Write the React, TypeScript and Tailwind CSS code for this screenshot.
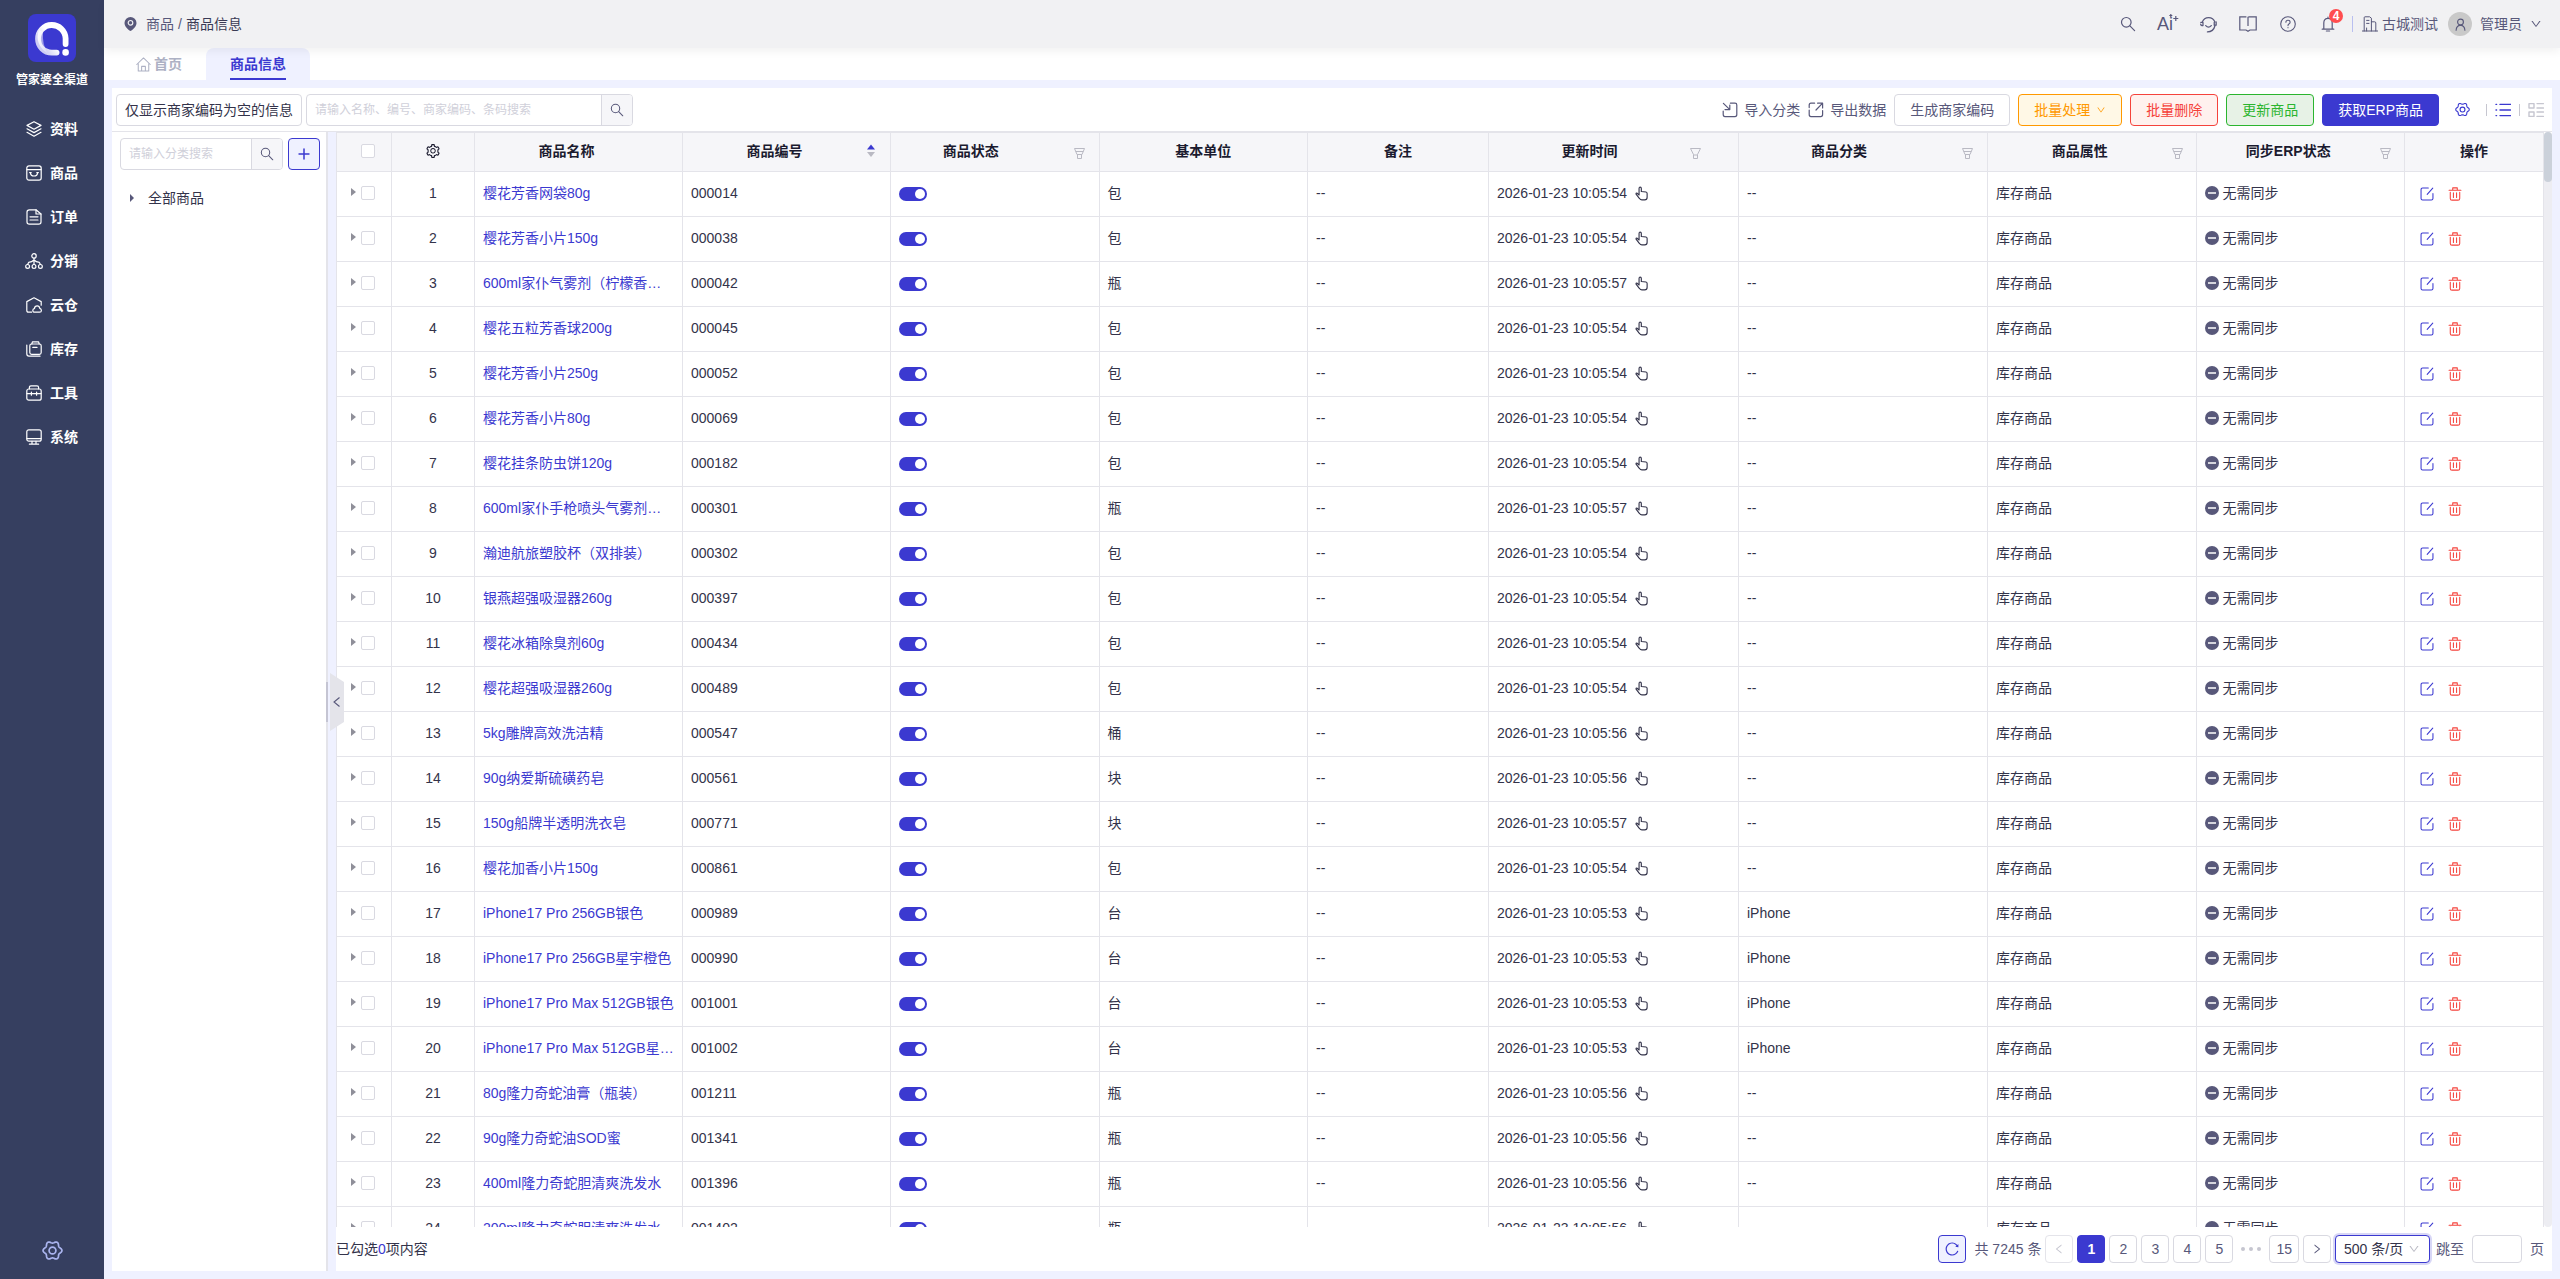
import { useState } from 'react';
import type { ReactNode } from 'react';
import clsx from 'clsx';
import { AiOutlineDown, AiOutlineLeft, AiOutlineReload, AiOutlineRight, AiOutlineSetting } from 'react-icons/ai';

type IconProps = { className?: string; size?: number; children?: ReactNode; sw?: number };

function Svg({ className, size = 16, sw = 1, children }: IconProps) {
  return (
    <svg
      className={clsx('shrink-0', className)}
      width={size}
      height={size}
      viewBox="0 0 16 16"
      fill="none"
      stroke="currentColor"
      strokeWidth={sw}
      strokeLinecap="round"
      strokeLinejoin="round"
      aria-hidden="true"
    >
      {children}
    </svg>
  );
}

const SearchIcon = ({ size = 16, className }: IconProps) => (
  <Svg size={size} className={className} sw={1.2}>
    <circle cx="6.3" cy="6.3" r="4.8" />
    <path d="M9.9 9.9 L14.6 14.6" />
  </Svg>
);

// six soft lobes round the hub
const gearOutline = Array.from({ length: 72 }, (_, i) => {
  const a = (i * Math.PI) / 36;
  const r = 6.4 + 0.8 * Math.cos(6 * a);
  return `${(8 + r * Math.cos(a)).toFixed(2)},${(8 + r * Math.sin(a)).toFixed(2)}`;
}).join(' ');

const GearIcon = ({ size = 16, className, sw = 1.2 }: IconProps) => (
  <Svg size={size} className={className} sw={sw}>
    <polygon points={gearOutline} />
    <circle cx="8" cy="8" r="2.6" />
  </Svg>
);

const EditIcon = () => (
  <Svg size={14} sw={1.2}>
    <path d="M9.5 1.2 H3 Q1.2 1.2 1.2 3 V13 Q1.2 14.8 3 14.8 H13 Q14.8 14.8 14.8 13 V7.5" />
    <path d="M14.6 1.2 L8.2 8.4" />
  </Svg>
);

const TrashIcon = () => (
  <Svg size={14} sw={1.2}>
    <path d="M1.2 3.6 H14.8 M5.4 3.4 V1 H10.6 V3.4 M2.6 6 V13 Q2.6 15 4.6 15 H11.4 Q13.4 15 13.4 13 V6" />
    <path d="M6.2 6.5 V12 M9.8 6.5 V12" />
  </Svg>
);

const HandIcon = () => (
  <Svg size={15} sw={1.2}>
    <path d="M5.4 9.6 V2.6 Q5.4 1.2 6.6 1.2 Q7.8 1.2 7.8 2.6 V5.8 L12.8 6.4 Q14 6.6 14 8 V12 Q14 14.8 11.4 14.8 H8.4 Q6.8 14.8 5.9 13.4 L2.2 8.6 Q2 7.4 3.2 7.6 L5.4 9.6" />
  </Svg>
);

const StatusIcon = () => (
  <svg className="shrink-0" width="14" height="14" viewBox="0 0 14 14" aria-hidden="true">
    <circle cx="7" cy="7" r="7" fill="#58587a" />
    <path d="M3 7 H11" stroke="#fff" strokeWidth="1.5" />
  </svg>
);

const FilterIcon = ({ lines }: { lines?: boolean }) => (
  <svg className="mt-1 shrink-0" width="11" height="11" viewBox="0 0 11 11" fill="none" stroke="#b9b9c3" aria-hidden="true">
    {lines ? (
      <path d="M0.5 0.5 H10.5 L8 6.5 H3 Z M1.8 3.5 H9.2 M3.5 6.5 V10.5 H7.5 V6.5" />
    ) : (
      <path d="M0.5 0.5 H10.5 L7.5 6.5 V10.5 H3.5 V6.5 Z M3.5 7 H7.5" />
    )}
  </svg>
);

const SortIcon = () => (
  <svg className="shrink-0" width="10" height="14" viewBox="0 0 10 14" aria-hidden="true">
    <path d="M1 5.5 L5 0.5 L9 5.5 Z" fill="#3b39d0" />
    <path d="M1 8 L5 13 L9 8 Z" fill="#b9b9c3" />
  </svg>
);

const menu: { label: string; icon: ReactNode }[] = [
  {
    label: '资料',
    icon: (
      <>
        <path d="M8 0.7 L15 4.4 L8 8.2 L1 4.4 Z" />
        <path d="M1 7.8 L8 11.6 L15 7.8 M1 11.3 L8 15.2 L15 11.3" />
      </>
    ),
  },
  {
    label: '商品',
    icon: (
      <>
        <rect x="0.8" y="0.8" width="14.4" height="14.4" rx="2.2" />
        <path d="M1 4.6 H15 M4.4 7.6 Q4.6 11 8 11 Q11.4 11 11.6 7.6 M3.6 7.6 H5.2 M10.8 7.6 H12.4" />
      </>
    ),
  },
  {
    label: '订单',
    icon: (
      <>
        <path d="M10 0.8 H3.4 Q1 0.8 1 3 V13 Q1 15.2 3.4 15.2 H12.6 Q15 15.2 15 13 V5 Z" />
        <path d="M10 0.8 V5 H15 M4 7.8 H12 M4 11 H12" />
      </>
    ),
  },
  {
    label: '分销',
    icon: (
      <>
        <circle cx="8" cy="2.9" r="2.2" />
        <circle cx="1.6" cy="13.4" r="1.9" />
        <circle cx="8" cy="13.4" r="1.9" />
        <circle cx="14.4" cy="13.4" r="1.9" />
        <path d="M8 5.2 V11.4 M8 7 Q6 9 2.6 9.4 L1.6 11.4 M8 7 Q10 9 13.4 9.4 L14.4 11.4" />
      </>
    ),
  },
  {
    label: '云仓',
    icon: (
      <>
        <path d="M5.6 15.2 H2.4 Q0.8 15.2 0.8 13.6 V4.6 L8 0.8 L15.2 4.6 V8.2" />
        <path d="M8.8 15.2 Q6.8 15.2 6.8 13.4 Q6.8 11.8 8.4 11.6 Q8.8 8.8 11.2 8.8 Q13.4 8.8 13.8 11.4 Q15.4 11.8 15.4 13.4 Q15.4 15.2 13.6 15.2 Z" />
      </>
    ),
  },
  {
    label: '库存',
    icon: (
      <>
        <rect x="3.8" y="3" width="11.4" height="10.4" rx="1.8" />
        <path d="M5.8 3 L6.4 0.8 H12.6 L13.2 3 M6.8 6.4 H11 M0.8 4 V12.8 Q0.8 15.2 3 15.2 H14" />
      </>
    ),
  },
  {
    label: '工具',
    icon: (
      <>
        <rect x="0.8" y="4" width="14.4" height="11.2" rx="2" />
        <path d="M3.4 3.8 V2.4 Q3.4 0.8 5 0.8 H11 Q12.6 0.8 12.6 2.4 V3.8 M1 8.6 H15 M5.4 7 V10.2 M10.6 7 V10.2" />
      </>
    ),
  },
  {
    label: '系统',
    icon: (
      <>
        <rect x="0.8" y="0.8" width="14.4" height="11.4" rx="2" />
        <path d="M1 9.6 H15 M6 12.4 V15 M10 12.4 V15 M3.4 15.2 H12.6" />
      </>
    ),
  },
];

interface Product {
  name: string;
  code: string;
  unit: string;
  sec: string;
  category?: string;
}

const products: Product[] = [
  { name: '樱花芳香网袋80g', code: '000014', unit: '包', sec: '54' },
  { name: '樱花芳香小片150g', code: '000038', unit: '包', sec: '54' },
  { name: '600ml家仆气雾剂（柠檬香…', code: '000042', unit: '瓶', sec: '57' },
  { name: '樱花五粒芳香球200g', code: '000045', unit: '包', sec: '54' },
  { name: '樱花芳香小片250g', code: '000052', unit: '包', sec: '54' },
  { name: '樱花芳香小片80g', code: '000069', unit: '包', sec: '54' },
  { name: '樱花挂条防虫饼120g', code: '000182', unit: '包', sec: '54' },
  { name: '600ml家仆手枪喷头气雾剂…', code: '000301', unit: '瓶', sec: '57' },
  { name: '瀚迪航旅塑胶杯（双排装）', code: '000302', unit: '包', sec: '54' },
  { name: '银燕超强吸湿器260g', code: '000397', unit: '包', sec: '54' },
  { name: '樱花冰箱除臭剂60g', code: '000434', unit: '包', sec: '54' },
  { name: '樱花超强吸湿器260g', code: '000489', unit: '包', sec: '54' },
  { name: '5kg雕牌高效洗洁精', code: '000547', unit: '桶', sec: '56' },
  { name: '90g纳爱斯硫磺药皂', code: '000561', unit: '块', sec: '56' },
  { name: '150g船牌半透明洗衣皂', code: '000771', unit: '块', sec: '57' },
  { name: '樱花加香小片150g', code: '000861', unit: '包', sec: '54' },
  { name: 'iPhone17 Pro 256GB银色', code: '000989', unit: '台', sec: '53', category: 'iPhone' },
  { name: 'iPhone17 Pro 256GB星宇橙色', code: '000990', unit: '台', sec: '53', category: 'iPhone' },
  { name: 'iPhone17 Pro Max 512GB银色', code: '001001', unit: '台', sec: '53', category: 'iPhone' },
  { name: 'iPhone17 Pro Max 512GB星…', code: '001002', unit: '台', sec: '53', category: 'iPhone' },
  { name: '80g隆力奇蛇油膏（瓶装）', code: '001211', unit: '瓶', sec: '56' },
  { name: '90g隆力奇蛇油SOD蜜', code: '001341', unit: '瓶', sec: '56' },
  { name: '400ml隆力奇蛇胆清爽洗发水', code: '001396', unit: '瓶', sec: '56' },
  { name: '200ml隆力奇蛇胆清爽洗发水', code: '001402', unit: '瓶', sec: '56' },
];

function Sidebar() {
  return (
    <aside className="flex w-[104px] shrink-0 flex-col items-center bg-[#363f60] pt-[14px] text-white">
      <svg width="48" height="48" viewBox="0 0 48 48" role="img" aria-label="logo">
        <defs>
          <linearGradient id="ring" x1="0.1" y1="0.75" x2="0.75" y2="0.3">
            <stop offset="0" stopColor="#fff" stopOpacity="0.75" />
            <stop offset="0.6" stopColor="#fff" />
          </linearGradient>
          <linearGradient id="crescent" x1="0" y1="0" x2="1" y2="0">
            <stop offset="0" stopColor="#fff" stopOpacity="0.9" />
            <stop offset="1" stopColor="#fff" stopOpacity="0.1" />
          </linearGradient>
        </defs>
        <rect width="48" height="48" rx="8" fill="#3b39d0" />
        <path d="M11 16 Q6 30 20 40 Q14 30 15 18 Z" fill="url(#crescent)" />
        <path
          d="M37.6 30 V24.4 A13.8 13.8 0 1 0 23.8 38.6 H28.6"
          fill="none"
          stroke="url(#ring)"
          strokeWidth="5.8"
          strokeLinecap="round"
        />
        <circle cx="37.6" cy="38.4" r="3.3" fill="#fff" />
      </svg>
      <div className="mt-[9px] text-xs leading-[18px] font-bold">管家婆全渠道</div>
      <nav className="mt-[18px] flex w-full flex-col">
        {menu.map((m) => (
          <a key={m.label} href="#" className="flex h-11 items-center gap-2 pl-[26px] text-sm font-bold">
            <Svg sw={1.2} className="overflow-visible">{m.icon}</Svg>
            {m.label}
          </a>
        ))}
      </nav>
      <button type="button" aria-label="设置" className="mt-auto mb-[18px] text-[#aab4ee]">
        <GearIcon size={21} sw={1.3} />
      </button>
    </aside>
  );
}

function HeaderIcon({ label, children }: { label: string; children: ReactNode }) {
  return (
    <button type="button" aria-label={label} className="relative flex h-12 w-10 items-center justify-center">
      {children}
    </button>
  );
}

function TopBar() {
  return (
    <header className="relative z-10 flex h-12 items-center bg-[#f1f1f3] pr-[18px] pl-5 text-sm text-[#58587a] shadow-[0_4px_8px_rgba(0,0,0,0.05)]">
      <svg className="mr-[9px]" width="13" height="14" viewBox="0 0 13 14" aria-hidden="true">
        <path d="M6.5 0 A6 6 0 0 1 12.5 6 C12.5 9.6 9 12.6 6.5 14 C4 12.6 0.5 9.6 0.5 6 A6 6 0 0 1 6.5 0 Z" fill="#58587a" />
        <circle cx="6.5" cy="5.8" r="2.3" fill="none" stroke="#f1f1f3" strokeWidth="1.2" />
      </svg>
      <a href="#">商品</a>
      <span className="mx-1">/</span>
      <span className="text-[#3a3a55]">商品信息</span>

      <div className="ml-auto flex items-center">
        <HeaderIcon label="搜索">
          <SearchIcon size={16} />
        </HeaderIcon>
        <HeaderIcon label="AI 助手">
          <span className="flex items-start text-lg leading-5">
            Ai
            <svg className="-ml-1" width="10" height="9" viewBox="0 0 10 9" stroke="currentColor" strokeWidth="1.2" aria-hidden="true">
              <path d="M6.8 2 V7 M4.3 4.5 H9.3 M1.8 0 V3 M0.3 1.5 H3.3" />
            </svg>
          </span>
        </HeaderIcon>
        <HeaderIcon label="客服">
          <Svg sw={1.2} size={17}>
            <path d="M2.2 5.6 A6.3 6.3 0 0 1 14 5.6 M0.8 6 H2.8 V9 H1.8 Q0.6 8.8 0.6 7.6 M15.2 5.6 V8.6 H13.4 V6 M14 9.4 Q12.6 15 7 15 M5.4 9 Q8 11.8 10.6 9" />
          </Svg>
        </HeaderIcon>
        <HeaderIcon label="帮助文档">
          <svg width="18" height="16" viewBox="0 0 18 16" fill="none" stroke="currentColor" strokeWidth="1.2" aria-hidden="true">
            <path d="M7.4 0.8 H0.8 V14 H7 L9 15.2 L11 14 H17.2 V0.8 H9.4 M9 0.8 V10" />
          </svg>
        </HeaderIcon>
        <HeaderIcon label="帮助">
          <Svg sw={1.1}>
            <circle cx="8" cy="8" r="7.3" />
            <path d="M5.9 6.3 Q5.9 4.3 8 4.3 Q10.1 4.3 10.1 6.2 Q10.1 7.3 8.9 7.9 Q8 8.4 8 9.6 M8 11.6 V11.8" />
          </Svg>
        </HeaderIcon>
        <HeaderIcon label="消息">
          <Svg sw={1.2}>
            <path d="M2.2 13.2 H13.8 M3.8 13 V7 Q3.8 2.4 8 2.4 Q12.2 2.4 12.2 7 V13 M8 2.2 V1 M6.4 15 H9.6" />
          </Svg>
          <span className="absolute top-[9px] left-[21px] flex size-[14px] items-center justify-center rounded-full bg-[#ff4d4f] text-xs leading-none font-bold text-white">
            4
          </span>
        </HeaderIcon>
        <span className="mx-1 h-4 w-px bg-[#b9bff0]" />
        <Svg className="ml-[5px]">
          <path d="M0.4 15 H15.6 M2.2 15 V1.6 Q2.2 0.8 3 0.8 H7.6 L9.4 2.2 V15 M9.4 5.8 H12.6 Q13.8 5.8 13.8 7 V15 M4.6 4.4 H7 M4.6 7.4 H7 M4.6 12 V15" />
        </Svg>
        <span className="ml-1">古城测试</span>
        <button type="button" className="ml-[10px] flex items-center">
          <span className="flex size-6 items-center justify-center rounded-full bg-[#c9c9c9]">
            <Svg size={13} sw={1.4}>
              <circle cx="8" cy="5" r="3.6" />
              <path d="M2.6 15 Q3 9.4 8 8.8 Q13 9.4 13.4 15" />
            </Svg>
          </span>
          <span className="mx-2">管理员</span>
          <AiOutlineDown size={12} />
        </button>
      </div>
    </header>
  );
}

function Tabs() {
  return (
    <div className="flex h-8 bg-white text-sm font-bold">
      <a href="#" className="flex w-[102px] items-center gap-[3px] pl-8 text-[#adb1c4]">
        <Svg size={15} sw={1.1}>
          <path d="M0.8 8 L8 1 L15.2 8 M2.4 6.8 V15 H13.6 V6.8 M6 15 V10 H10 V15" />
        </Svg>
        首页
      </a>
      <a href="#" className="flex h-full items-end rounded-t-lg bg-[#eff1ff] px-6 text-[#3b39d0]">
        <span className="border-b-2 border-[#3b39d0] leading-7">商品信息</span>
      </a>
    </div>
  );
}

function SearchBox({ id, placeholder, className }: { id: string; placeholder: string; className: string }) {
  return (
    <div className={clsx('flex h-8 overflow-hidden rounded border border-[#d9d9e1]', className)}>
      <input
        id={id}
        type="text"
        aria-label={placeholder}
        placeholder={placeholder}
        className="min-w-0 flex-1 px-2 text-xs outline-none placeholder:text-[#d0d0da]"
      />
      <button type="button" aria-label="搜索" className="flex w-[31px] items-center justify-center border-l border-[#d9d9e1] bg-[#f6f6f9] text-[#58587a]">
        <SearchIcon size={14} />
      </button>
    </div>
  );
}

function Toolbar() {
  const btn = 'flex h-8 items-center rounded border px-[15px]';
  return (
    <div className="flex h-11 shrink-0 items-center border-b border-[#e4e4ea] pr-2 pl-1 text-sm">
      <button type="button" className="h-8 rounded border border-[#d9d9e1] px-2 text-[#33334a]">
        仅显示商家编码为空的信息
      </button>
      <SearchBox id="kw" placeholder="请输入名称、编号、商家编码、条码搜索" className="ml-1 w-[327px]" />

      <div className="ml-auto flex items-center gap-2 text-[#58587a]">
        <button type="button" className="flex items-center gap-[6px]">
          <Svg sw={1.2}>
            <path d="M8.4 1.2 H13 Q14.8 1.2 14.8 3 V12.6 Q14.8 14.6 13 14.6 H3 Q1.2 14.6 1.2 12.6 V9 M1.4 1.4 L7.6 7.4 M7.8 3 V7.6 H3" />
          </Svg>
          导入分类
        </button>
        <button type="button" className="flex items-center gap-[6px]">
          <Svg sw={1.2}>
            <path d="M6.6 1.2 H3 Q1.2 1.2 1.2 3 V5.6 M1.2 8 V12.6 Q1.2 14.6 3 14.6 H12.8 Q14.6 14.6 14.6 12.6 V8.6 M8 8 L14.4 1.4 M9.6 1.2 H14.6 V6" />
          </Svg>
          导出数据
        </button>
        <button type="button" className={clsx(btn, 'border-[#d9d9e1]')}>生成商家编码</button>
        <button type="button" className={clsx(btn, 'gap-[6px] border-[#ff9900] bg-[#fff8e6] text-[#ff9900]')}>
          批量处理
          <AiOutlineDown size={10} />
        </button>
        <button type="button" className={clsx(btn, 'border-[#f5423b] bg-[#fff1ee] text-[#f5423b]')}>批量删除</button>
        <button type="button" className={clsx(btn, 'border-[#2bb52f] bg-[#e7f2e6] text-[#2bb52f]')}>更新商品</button>
        <button type="button" className={clsx(btn, 'border-[#3b39d0] bg-[#3b39d0] text-white')}>获取ERP商品</button>
        <button type="button" aria-label="列设置" className="ml-2 text-[#3b39d0]">
          <GearIcon size={15} />
        </button>
        <span className="ml-2 h-3 w-px bg-[#c6c6d0]" />
        <button type="button" aria-label="列表视图" className="text-[#3b39d0]">
          <Svg sw={1.4}>
            <path d="M1 2.4 H1.6 M5 2.4 H15.6 M1 8 H1.6 M5 8 H15.6 M1 13.6 H1.6 M5 13.6 H15.6" />
          </Svg>
        </button>
        <span className="h-3 w-px bg-[#c6c6d0]" />
        <button type="button" aria-label="卡片视图" className="text-[#c6c6d0]">
          <Svg sw={1.4}>
            <path d="M1 1.6 H6 V6 H1 Z M1 10 H6 V14.4 H1 Z M9 1.6 H15.4 M9 6 H15.4 M9 10 H15.4 M9 14.4 H15.4" />
          </Svg>
        </button>
      </div>
    </div>
  );
}

function CategoryPanel() {
  return (
    <section className="relative flex w-[216px] shrink-0 flex-col border-r-2 border-[#e4e4ea] bg-white pt-[6px] pl-2">
      <div className="flex">
        <SearchBox id="cat" placeholder="请输入分类搜索" className="w-[163px]" />
        <button type="button" aria-label="新增分类" className="ml-[5px] flex size-8 items-center justify-center rounded border border-[#3b39d0] bg-[#eff1ff] text-[#3b39d0]">
          <Svg size={12} sw={2}>
            <path d="M8 1.4 V14.6 M1.4 8 H14.6" />
          </Svg>
        </button>
      </div>
      <button type="button" className="mt-[18px] flex items-center pl-[10px] text-sm text-[#33334a]">
        <span className="mr-[14px] border-y-4 border-l-4 border-y-transparent border-l-[#58587a]" />
        全部商品
      </button>
      <span className="absolute top-[550px] -right-0.5 h-10 w-0.5 bg-[#c5c5d3]" />
      <button type="button" aria-label="收起" className="absolute top-[541px] -right-[18px] z-10 text-[#58587a]">
        <svg width="14" height="58" viewBox="0 0 14 58" fill="none" aria-hidden="true">
          <path d="M0 0 L14 9 V49 L0 58 Z" fill="#e4e4ea" />
          <path d="M9.5 24.5 L4 29 L9.5 33.5" stroke="currentColor" strokeWidth="1.1" />
        </svg>
      </button>
    </section>
  );
}

const columns: { title: string; width: string; tools?: ReactNode }[] = [
  { title: '商品名称', width: 'w-[208px]', tools: <span className="w-6 shrink-0" /> },
  { title: '商品编号', width: 'w-[208px]', tools: <span className="w-6 shrink-0"><SortIcon /></span> },
  { title: '商品状态', width: '', tools: <span className="flex w-12 shrink-0 justify-end pr-[14px]"><FilterIcon lines /></span> },
  { title: '基本单位', width: '' },
  { title: '备注', width: 'w-[181px]' },
  { title: '更新时间', width: 'w-[250px]', tools: <span className="flex w-12 shrink-0"><FilterIcon /></span> },
  { title: '商品分类', width: 'w-[249px]', tools: <span className="flex w-12 shrink-0 justify-end pr-[14px]"><FilterIcon lines /></span> },
  { title: '商品属性', width: '', tools: <span className="w-6 shrink-0"><FilterIcon lines /></span> },
  { title: '同步ERP状态', width: '', tools: <span className="w-6 shrink-0"><FilterIcon lines /></span> },
  { title: '操作', width: 'w-[139px]' },
];

const boxCls = 'size-[14px] shrink-0 appearance-none rounded-xs border border-[#d9d9e1] bg-white checked:border-[#3b39d0] checked:bg-[#3b39d0]';
const cell = 'border-r border-b border-[#e4e4ea] pb-0.5';

function ProductRow({ p, no, checked, onCheck }: { p: Product; no: number; checked: boolean; onCheck: () => void }) {
  const [on, setOn] = useState(true);
  return (
    <tr className="h-[45px]">
      <td className={cell}>
        <div className="flex items-center pl-[14px]">
          <button type="button" aria-label="展开" className="mr-[5px] mb-0.5 border-y-4 border-l-[5px] border-y-transparent border-l-[#8f8f99]" />
          <input type="checkbox" aria-label={`选择 ${p.name}`} checked={checked} onChange={onCheck} className={boxCls} />
        </div>
      </td>
      <td className={clsx(cell, 'text-center')}>{no}</td>
      <td className={clsx(cell, 'px-2')}>
        <a href="#" className="block truncate text-[#3b39d0]">{p.name}</a>
      </td>
      <td className={clsx(cell, 'px-2')}>{p.code}</td>
      <td className={clsx(cell, 'px-2')}>
        <button
          type="button"
          role="switch"
          aria-checked={on}
          aria-label="商品状态"
          onClick={() => setOn(!on)}
          className={clsx('mt-0.5 flex h-[14px] w-7 items-center rounded-full px-0.5', on ? 'justify-end bg-[#3b39d0]' : 'justify-start bg-[#c6c6d0]')}
        >
          <span className="size-[10px] rounded-full bg-white" />
        </button>
      </td>
      <td className={clsx(cell, 'px-2')}>{p.unit}</td>
      <td className={clsx(cell, 'px-2')}>--</td>
      <td className={clsx(cell, 'px-2')}>
        <div className="flex items-center gap-[7px]">
          2026-01-23 10:05:{p.sec}
          <HandIcon />
        </div>
      </td>
      <td className={clsx(cell, 'px-2')}>{p.category ?? '--'}</td>
      <td className={clsx(cell, 'px-2')}>库存商品</td>
      <td className={clsx(cell, 'px-2')}>
        <div className="flex items-center gap-1">
          <StatusIcon />
          无需同步
        </div>
      </td>
      <td className={cell}>
        <div className="flex gap-[14px] pt-0.5 pl-[15px]">
          <button type="button" aria-label="编辑" className="text-[#3b39d0]"><EditIcon /></button>
          <button type="button" aria-label="删除" className="text-[#f5423b]"><TrashIcon /></button>
        </div>
      </td>
    </tr>
  );
}

function Pagination({ count }: { count: number }) {
  const [page, setPage] = useState('1');
  const item = 'flex h-7 min-w-7 items-center justify-center rounded border';
  return (
    <footer className="flex h-11 shrink-0 items-center pr-2 text-sm text-[#58587a]">
      <div className="text-[#33334a]">
        已勾选<span className="text-[#3b39d0]">{count}</span>项内容
      </div>
      <div className="ml-auto flex items-center gap-1">
        <button type="button" aria-label="刷新" className={clsx(item, 'border-[#3b39d0] bg-[#eff1ff] text-[#3b39d0]')}>
          <AiOutlineReload size={16} />
        </button>
        <span className="ml-1">共 7245 条</span>
        <button type="button" aria-label="上一页" disabled className={clsx(item, 'border-[#e4e4ea] text-[#c6c6d0]')}>
          <AiOutlineLeft size={12} />
        </button>
        {['1', '2', '3', '4', '5', '...', '15'].map((n) =>
          n === '...' ? (
            <span key={n} className="flex w-7 justify-center gap-1">
              <i className="size-1 rounded-full bg-[#c6c6d0]" />
              <i className="size-1 rounded-full bg-[#c6c6d0]" />
              <i className="size-1 rounded-full bg-[#c6c6d0]" />
            </span>
          ) : (
            <button
              key={n}
              type="button"
              onClick={() => setPage(n)}
              className={clsx(item, 'px-[6px]', page === n ? 'border-[#3b39d0] bg-[#3b39d0] font-bold text-white' : 'border-[#d9d9e1]')}
            >
              {n}
            </button>
          ),
        )}
        <button type="button" aria-label="下一页" className={clsx(item, 'border-[#d9d9e1]')}>
          <AiOutlineRight size={12} />
        </button>
        <div className="relative">
          <select
            aria-label="每页条数"
            defaultValue="500"
            className="block h-7 w-[95px] appearance-none rounded border border-[#3b39d0] bg-white pl-2 text-[#33334a] ring-2 ring-[#3b39d0]/20 outline-none"
          >
            <option value="500">500 条/页</option>
            <option value="100">100 条/页</option>
          </select>
          <AiOutlineDown size={12} className="pointer-events-none absolute top-2 right-[10px] text-[#b9b9c3]" />
        </div>
        <label htmlFor="jump" className="mr-1 ml-0.5">跳至</label>
        <input id="jump" type="text" className="h-7 w-[50px] rounded border border-[#d9d9e1] px-1 outline-none" />
        <span className="ml-1">页</span>
      </div>
    </footer>
  );
}

export default function App() {
  const [selected, setSelected] = useState<string[]>([]);
  const toggle = (code: string) =>
    setSelected((s) => (s.includes(code) ? s.filter((c) => c !== code) : [...s, code]));
  const all = selected.length === products.length;

  return (
    <div className="flex h-screen overflow-hidden bg-[#eff1ff] font-['Liberation_Sans','Noto_Sans_CJK_SC',sans-serif]">
      <Sidebar />
      <div className="flex min-w-0 flex-1 flex-col">
        <TopBar />
        <Tabs />
        <main className="m-2 flex min-h-0 flex-1 flex-col">
          <div className="bg-white">
            <Toolbar />
          </div>
          <div className="flex min-h-0 flex-1 gap-2">
            <CategoryPanel />
            <section className="flex min-w-0 flex-1 flex-col bg-white">
              <div className="flex min-h-0 flex-1">
                <div className="min-w-0 flex-1 overflow-hidden border-t border-l border-[#e4e4ea]">
                  <table className="w-full table-fixed border-separate border-spacing-0 text-sm text-[#33334a]">
                    <thead className="bg-[#f6f6f9] text-[#1b1b2f]">
                      <tr className="h-[39px]">
                        <th className={clsx(cell, 'w-[55px]')}>
                          <div className="flex justify-end pr-4">
                            <input
                              type="checkbox"
                              aria-label="全选"
                              checked={all}
                              onChange={() => setSelected(all ? [] : products.map((p) => p.code))}
                              className={boxCls}
                            />
                          </div>
                        </th>
                        <th className={clsx(cell, 'w-[83px]')}>
                          <button type="button" aria-label="表头设置" className="block w-full">
                            <AiOutlineSetting size={16} className="mx-auto" />
                          </button>
                        </th>
                        {columns.map((c) => (
                          <th key={c.title} className={clsx(cell, c.width)}>
                            <div className="flex items-center">
                              <span className="flex-1">{c.title}</span>
                              {c.tools}
                            </div>
                          </th>
                        ))}
                      </tr>
                    </thead>
                    <tbody>
                      {products.map((p, i) => (
                        <ProductRow
                          key={p.code}
                          p={p}
                          no={i + 1}
                          checked={selected.includes(p.code)}
                          onCheck={() => toggle(p.code)}
                        />
                      ))}
                    </tbody>
                  </table>
                </div>
                <div className="w-2 shrink-0 rounded-full bg-[#ededf2]">
                  <div className="h-[50px] rounded-full bg-[#cbd1da]" />
                </div>
              </div>
              <Pagination count={selected.length} />
            </section>
          </div>
        </main>
      </div>
    </div>
  );
}
